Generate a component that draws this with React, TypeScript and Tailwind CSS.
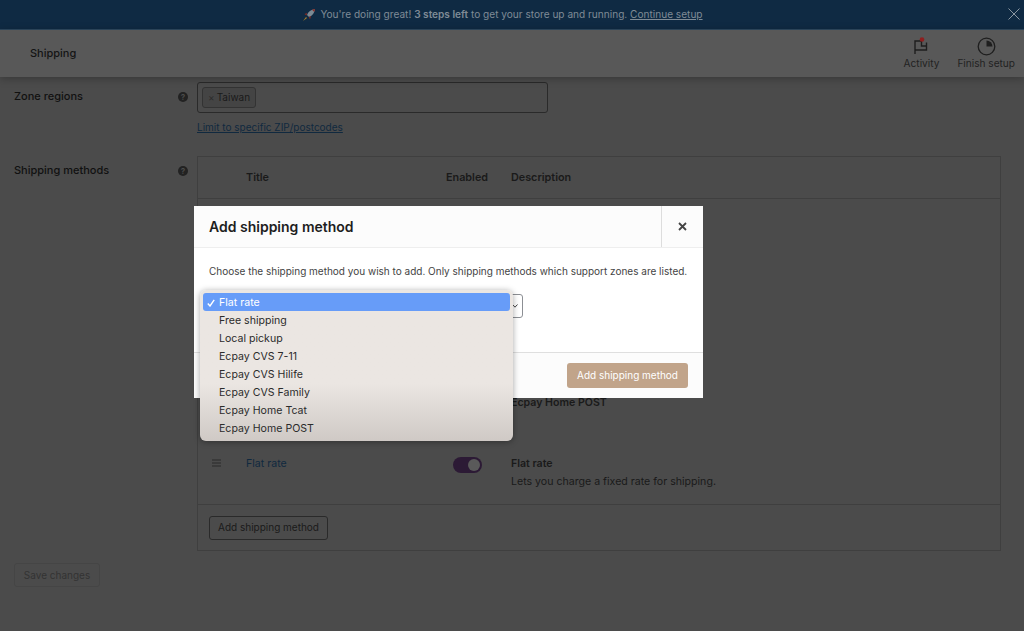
import React from 'react';

const font = 'font-["Inter","Liberation_Sans",sans-serif]';

const options = ['Free shipping', 'Local pickup', 'Ecpay CVS 7-11', 'Ecpay CVS Hilife', 'Ecpay CVS Family', 'Ecpay Home Tcat', 'Ecpay Home POST'];

const Help = () => (
  <span className="flex h-[10px] w-[10px] items-center justify-center rounded-full bg-[#222] text-[8px] font-bold leading-none text-[#4b4b4b]">?</span>
);

const Rocket = () => (
  <svg width="14" height="14" viewBox="0 0 14 14" className="mr-[4px]">
    <path d="M5 7 C6 4 9 1.500 13 1 C12.500 5 10 8 7 9 Z" fill="#7c8a94" />
    <path d="M10 1.700 L13 1 L12.300 4 Z" fill="#8c2a22" />
    <path d="M5 5 L2.500 6 L4.500 7.500 Z M7 9 L8 11.500 L9 8 Z" fill="#8c2a22" />
    <path d="M4 9 L1 13 L5 10 Z" fill="#a9802a" />
  </svg>
);

const Flag = () => (
  <svg width="16" height="18" viewBox="0 0 16 18" fill="none">
    <path d="M2 17 V4 H8.500 V9 H13.500 V5.500 M13.500 9 V13 H2" stroke="#1e1e1e" strokeWidth="1.400" />
    <circle cx="9" cy="2.500" r="2.300" fill="#8f1f1f" />
  </svg>
);

const Progress = () => (
  <svg width="19" height="19" viewBox="0 0 19 19" fill="none">
    <circle cx="9.500" cy="9.500" r="8.300" stroke="#1e1e1e" strokeWidth="1.300" />
    <path d="M9.500 3.500 A6 6 0 0 1 15.500 9.500 H9.500 Z" fill="#1e1e1e" />
  </svg>
);

const Modal = () => (
  <div className="absolute left-[194px] top-[206px] flex h-[192px] w-[509px] flex-col bg-white">
    <div className="flex h-[42px] shrink-0 items-center border-b border-[#eeeeee] bg-[#fcfcfc]">
      <h1 className="flex-1 pl-[15px] text-[14px] font-semibold text-[#1e1e1e]">Add shipping method</h1>
      <div className="flex h-full w-[42px] items-center justify-center border-l border-[#dddddd]">
        <svg width="9" height="9" viewBox="0 0 9 9" stroke="#444" strokeWidth="1.800"><path d="M1 1 L8 8 M8 1 L1 8" /></svg>
      </div>
    </div>
    <div className="flex-1 px-[15px] pt-[17px]">
      <p className="whitespace-nowrap text-[10px] leading-[13px] text-[#444]">Choose the shipping method you wish to add. Only shipping methods which support zones are listed.</p>
      <div className="relative mt-[16px] flex h-[24px] w-[314px] items-center justify-end rounded-[3px] border border-[#8c8f94] pr-[4px]">
        <svg width="6" height="4" viewBox="0 0 6 4" fill="none" stroke="#444" strokeWidth="1"><path d="M0.500 0.500 L3 3.200 L5.500 0.500" /></svg>
      </div>
    </div>
    <div className="flex h-[46px] shrink-0 items-center justify-end border-t border-[#dfdfdf] bg-[#fcfcfc] pr-[15px]">
      <button className="h-[25px] w-[121px] rounded-[3px] bg-[#c1a48a] text-[10px] text-white">Add shipping method</button>
    </div>
    <div className="absolute left-[6px] top-[84px] w-[313px] rounded-[6px] bg-gradient-to-b from-[#ebe6e2] from-[62%] to-[#cfc9c5] p-[3px] pt-[3px] pb-[4px] shadow-[0_1px_6px_rgba(0,0,0,0.35)]">
      <div className="flex h-[18px] items-center rounded-[3px] bg-[#679cf8] pl-[4px] pt-[1px] text-[10.6px] text-white">
        <svg className="mr-[4px]" width="8" height="8" viewBox="0 0 8 8" fill="none" stroke="#fff" strokeWidth="1.400"><path d="M0.800 4.500 L3 7 L7.200 0.800" /></svg>
        Flat rate
      </div>
      {options.map((o) => (
        <div key={o} className="flex h-[18px] items-center pl-[16px] pt-[1px] text-[10.6px] text-[#2b2b2b]">{o}</div>
      ))}
    </div>
  </div>
);

export default function App() {
  return (
    <div className={`relative h-[631px] w-[1024px] overflow-hidden bg-[#4b4b4b] ${font}`}>
      <div className="relative flex h-[29px] items-center justify-center bg-[#0f2a43] pr-[19px] text-[10.1px] text-[#7f8b96]">
        <Rocket />
        <span>You're doing great! <b className="font-semibold">3 steps left</b> to get your store up and running. <span className="underline">Continue setup</span></span>
        <svg className="absolute right-[4px] top-[8px]" width="12" height="12" viewBox="0 0 12 12" stroke="#8b97a2" strokeWidth="1"><path d="M0.500 0.500 L11.500 11.500 M11.500 0.500 L0.500 11.500" /></svg>
      </div>

      <header className="relative z-10 flex h-[48px] items-center justify-between border-t border-[#2a4358] bg-[#585858] pl-[30px] pr-[9px] shadow-[0_2px_8px_rgba(0,0,0,0.25)]">
        <span className="text-[11px] font-medium text-[#141414]">Shipping</span>
        <div className="flex gap-[18px] pt-[1px] text-[10.1px] text-[#222]">
          <div className="flex flex-col items-center"><Flag /><span className="mt-[1px]">Activity</span></div>
          <div className="flex flex-col items-center"><Progress /><span>Finish setup</span></div>
        </div>
      </header>

      <main className="pl-[14px] pr-[23px] text-[10.6px] text-[#1a1a1a]">
        <section className="mt-[5px] flex">
          <div className="flex w-[183px] shrink-0 items-start justify-between pr-[9px] pt-[6px] text-[11px] font-medium text-[#111]">
            <span>Zone regions</span>
            <span className="mt-[4px]"><Help /></span>
          </div>
          <div>
            <div className="flex h-[31px] w-[351px] items-center rounded-[3px] border border-[#2a2a2a] pl-[4px]">
              <span className="flex h-[21px] w-[54px] items-center rounded-[3px] border border-[#333] bg-[#444] pl-[5px] text-[10px] text-[#1a1a1a]">
                <span className="mr-[2px] text-[#2c2c2c]">×</span>Taiwan
              </span>
            </div>
            <a className="mt-[7px] block text-[10px] text-[#10293f] underline">Limit to specific ZIP/postcodes</a>
          </div>
        </section>

        <section className="mt-[21px] flex">
          <div className="flex w-[183px] shrink-0 items-start justify-between pr-[9px] pt-[6px] text-[11px] font-medium text-[#111]">
            <span>Shipping methods</span>
            <span className="mt-[4px]"><Help /></span>
          </div>
          <div className="flex h-[395px] w-[804px] flex-col border border-[#3f3f3f]">
            <div className="flex h-[42px] shrink-0 items-center border-b border-[#3f3f3f] pt-[2px] text-[10.8px] font-semibold">
              <span className="ml-[48px] w-[200px]">Title</span>
              <span className="w-[65px]">Enabled</span>
              <span>Description</span>
            </div>
            <div className="flex-1 pl-[313px] pt-[196px] font-semibold">Ecpay Home POST</div>
            <div className="flex h-[58px] shrink-0 items-start pt-[10px]">
              <svg className="ml-[14px] mt-[3px]" width="9" height="8" viewBox="0 0 9 8" stroke="#2a2a2a" strokeWidth="1"><path d="M0 1 H9 M0 4 H9 M0 7 H9" /></svg>
              <a className="ml-[25px] w-[207px] text-[#10293f]">Flat rate</a>
              <span className="mt-[1px] flex h-[16px] w-[29px] items-center justify-end rounded-full bg-[#2c1a35] pr-[2px]">
                <span className="h-[12px] w-[12px] rounded-full bg-[#5a5a5a]" />
              </span>
              <div className="ml-[29px]">
                <div className="font-semibold">Flat rate</div>
                <div className="mt-[2px]">Lets you charge a fixed rate for shipping.</div>
              </div>
            </div>
            <div className="flex h-[46px] shrink-0 items-center border-t border-[#3f3f3f] pl-[11px]">
              <button className="h-[24px] w-[119px] rounded-[3px] border border-[#2a2a2a] text-[10px] text-[#1a1a1a]">Add shipping method</button>
            </div>
          </div>
        </section>

        <button className="mt-[12px] h-[24px] w-[86px] rounded-[3px] border border-[#454545] text-[10px] text-[#333]">Save changes</button>
      </main>

      <Modal />
    </div>
  );
}
